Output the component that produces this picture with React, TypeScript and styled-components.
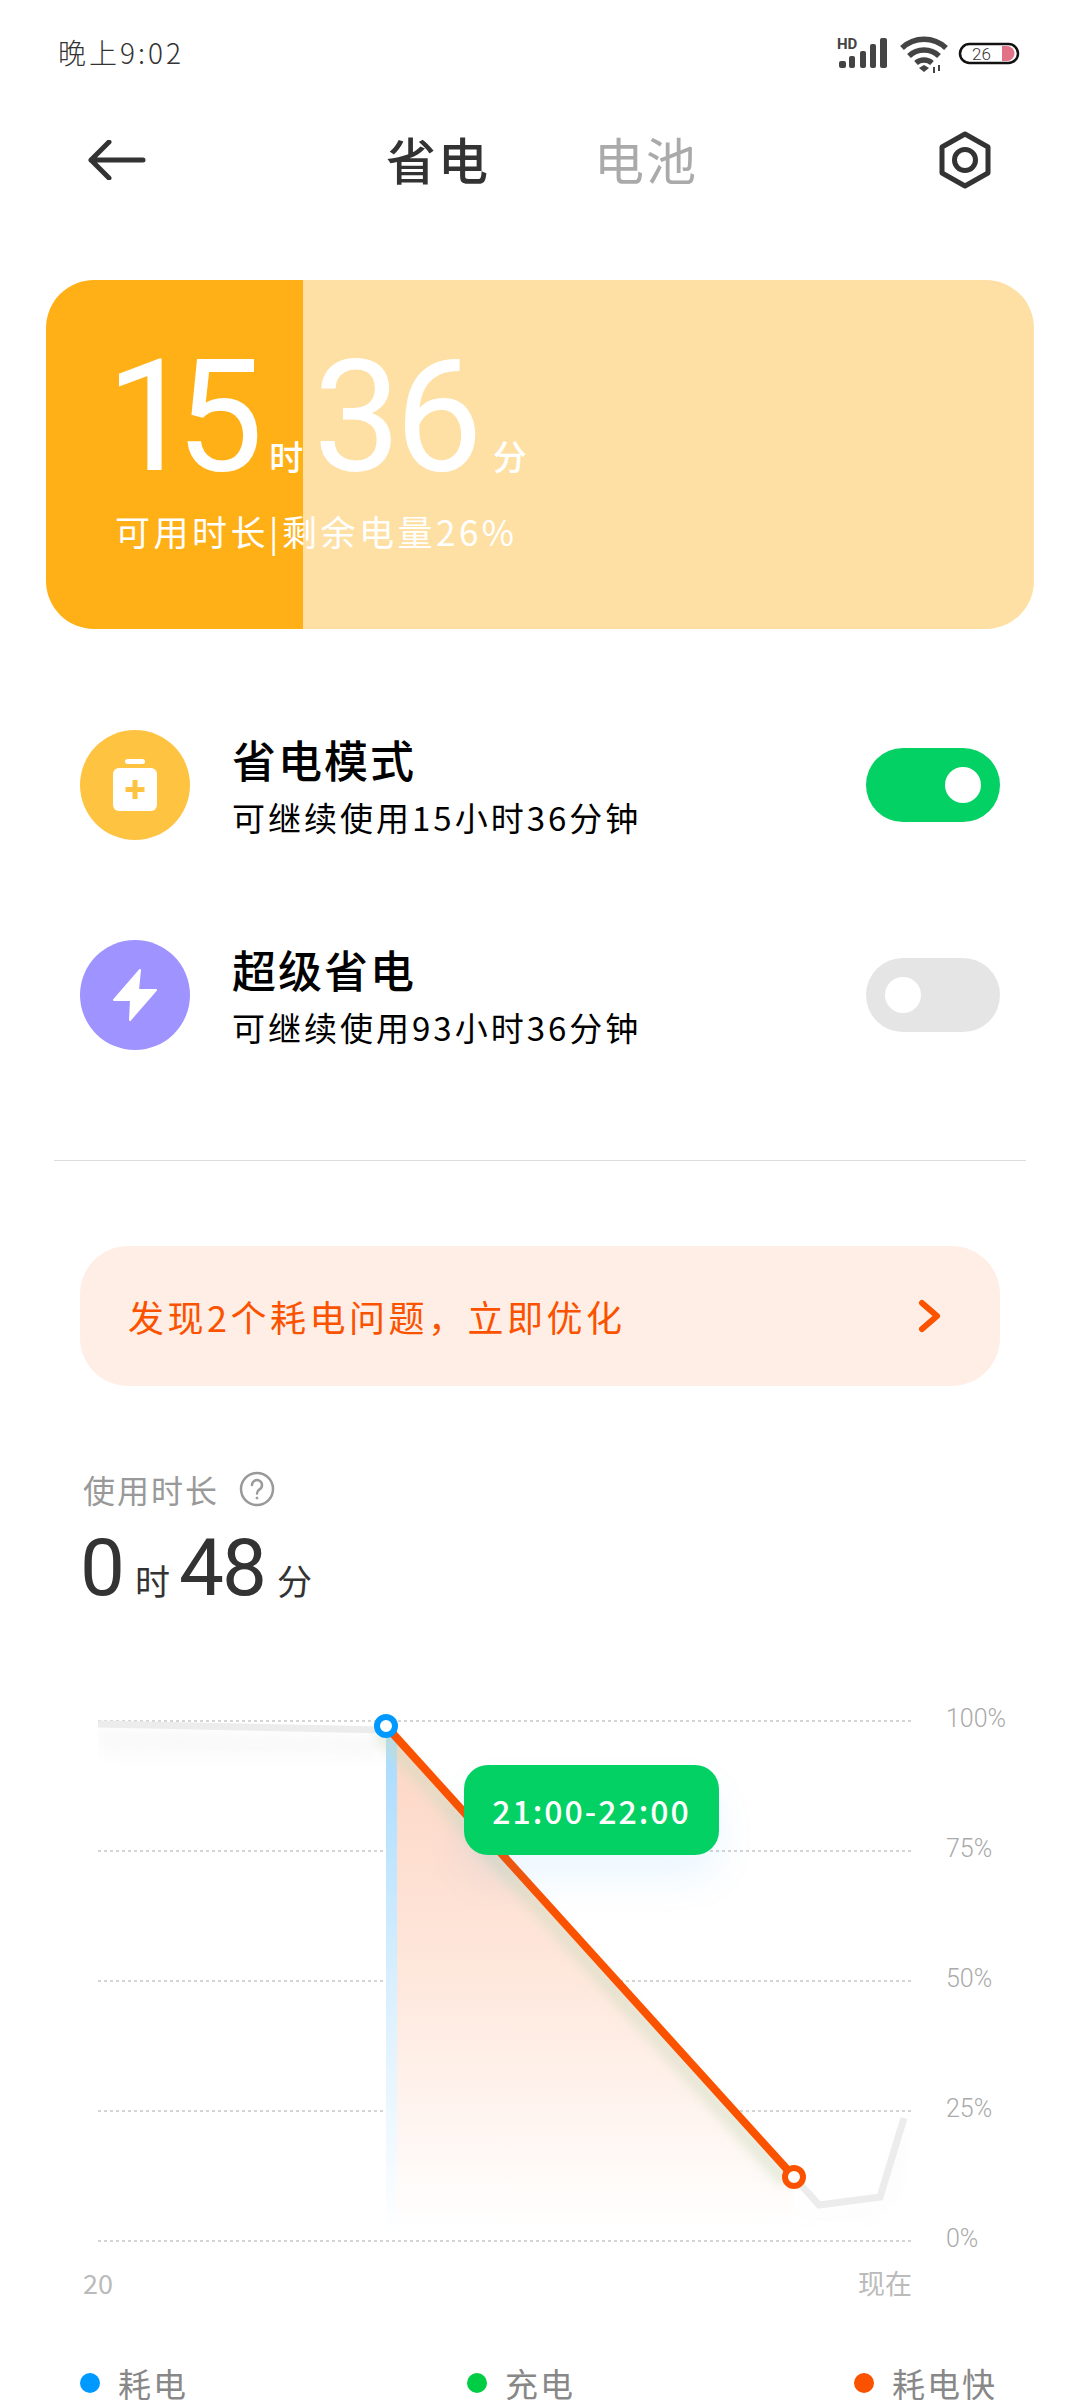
import React from 'react';
import styled, { createGlobalStyle } from 'styled-components';

const CJK = '"Noto Sans CJK SC", "Noto Sans", sans-serif';
const DIGITS = 'Roboto, "Noto Sans CJK SC", sans-serif';

const GlobalStyle = createGlobalStyle`
  html, body {
    margin: 0;
    padding: 0;
    background: #fff;
  }
  body {
    font-family: ${CJK};
  }
`;

const Page = styled.div`
  width: 1080px;
  height: 2400px;
  overflow: hidden;
  background: #fff;
`;

const StatusBar = styled.div`
  height: 104px;
  padding: 0 53px 0 58px;
  display: flex;
  align-items: center;
  justify-content: space-between;
  box-sizing: border-box;
`;

const Clock = styled.span`
  font-size: 28px;
  font-weight: 300;
  color: #333;
  letter-spacing: 3px;
`;

const StatusIcons = styled.svg`
  width: 190px;
  height: 50px;
  margin-top: 3px;
`;

const NavBar = styled.div`
  height: 112px;
  padding: 0 88px;
  display: flex;
  align-items: center;
  justify-content: space-between;
`;

const Tabs = styled.div`
  display: flex;
  gap: 104px;
  margin-top: -4px;
`;

const Tab = styled.span<{ $active?: boolean }>`
  font-size: 50px;
  line-height: 60px;
  letter-spacing: 2px;
  font-weight: ${(p) => (p.$active ? 500 : 400)};
  color: ${(p) => (p.$active ? '#333' : '#aaa')};
`;

const Card = styled.div<{ $level: number }>`
  height: 349px;
  margin: 64px 46px 0;
  padding: 62px 0 0 60px;
  box-sizing: border-box;
  border-radius: 48px;
  color: #fff;
  background: linear-gradient(
    90deg,
    #ffb017 ${(p) => p.$level}%,
    #fee0a5 ${(p) => p.$level}%
  );
`;

const CardNumbers = styled.div`
  display: flex;
  align-items: baseline;
  height: 150px;
`;

const BigDigit = styled.span<{ $spacing: number }>`
  font-family: ${DIGITS};
  font-size: 156px;
  line-height: 150px;
  font-weight: 400;
  letter-spacing: ${(p) => p.$spacing}px;
`;

const BigUnit = styled.span<{ $gap: number }>`
  font-size: 34px;
  line-height: 40px;
  font-weight: 500;
  margin: 0 -8px 0 ${(p) => p.$gap}px;
  width: 52px;
`;

const CardCaption = styled.div`
  margin-top: 14px;
  padding-left: 9px;
  font-size: 35px;
  line-height: 50px;
  letter-spacing: 3.5px;
`;

const ModeList = styled.div`
  margin-top: 51px;
`;

const ModeRow = styled.div`
  height: 210px;
  padding: 0 80px;
  display: flex;
  align-items: center;
`;

const ModeIcon = styled.div<{ $color: string }>`
  width: 110px;
  height: 110px;
  border-radius: 50%;
  background: ${(p) => p.$color};
  display: flex;
  align-items: center;
  justify-content: center;
  flex-shrink: 0;
`;

const ModeText = styled.div`
  flex: 1;
  margin-left: 42px;
`;

const ModeTitle = styled.div`
  font-size: 44px;
  line-height: 56px;
  font-weight: 500;
  letter-spacing: 2px;
  color: #000;
`;

const ModeSub = styled.div`
  margin-top: 8px;
  font-size: 33px;
  line-height: 44px;
  letter-spacing: 3px;
  color: #000;
`;

const Toggle = styled.div<{ $on?: boolean }>`
  width: 134px;
  height: 74px;
  border-radius: 37px;
  padding: 0 19px;
  box-sizing: border-box;
  display: flex;
  align-items: center;
  justify-content: ${(p) => (p.$on ? 'flex-end' : 'flex-start')};
  background: ${(p) => (p.$on ? '#03d164' : '#e5e5e5')};

  &::after {
    content: '';
    width: 36px;
    height: 36px;
    border-radius: 50%;
    background: #fff;
  }
`;

const Divider = styled.div`
  height: 1px;
  margin: 60px 54px 0;
  background: #ddd;
`;

const Banner = styled.div`
  height: 140px;
  margin: 85px 80px 0;
  padding: 0 58px 0 48px;
  border-radius: 48px;
  background: #ffeee6;
  display: flex;
  align-items: center;
  justify-content: space-between;
`;

const BannerText = styled.span`
  font-size: 36px;
  letter-spacing: 3.5px;
  color: #fb5200;
`;

const Usage = styled.div`
  margin: 83px 83px 0;
`;

const UsageLabel = styled.div`
  display: flex;
  align-items: center;
  gap: 20px;
  height: 40px;
  font-size: 32px;
  letter-spacing: 2px;
  color: #999;
`;

const UsageValue = styled.div`
  display: flex;
  align-items: baseline;
  margin: 19px 0 0 -3px;
  height: 80px;
  color: #333;
`;

const UsageDigit = styled.span`
  font-family: ${DIGITS};
  font-size: 80px;
  line-height: 80px;
  letter-spacing: -2px;
`;

const UsageUnit = styled.span`
  font-size: 35px;
  margin: 0 9px 0 12px;
`;

const Chart = styled.div`
  display: flex;
  margin: 92px 0 0 98px;
`;

const Plot = styled.div`
  position: relative;
  width: 815px;
  height: 560px;
`;

const PlotSvg = styled.svg`
  display: block;
`;

const Tooltip = styled.div`
  position: absolute;
  left: 366px;
  top: 65px;
  width: 255px;
  height: 90px;
  border-radius: 24px;
  background: #03d164;
  color: #fff;
  font-size: 32px;
  font-weight: 500;
  letter-spacing: 2px;
  display: flex;
  align-items: center;
  justify-content: center;
  box-shadow: 0 24px 40px rgba(0, 153, 255, 0.08);
`;

const YAxis = styled.div`
  margin: -46px 0 0 33px;
  display: flex;
  flex-direction: column;
`;

const YLabel = styled.div`
  height: 130px;
  line-height: 130px;
  font-family: ${DIGITS};
  font-weight: 300;
  font-size: 25px;
  color: #aaa;
`;

const XAxis = styled.div`
  width: 829px;
  margin: -41px 0 0 83px;
  display: flex;
  justify-content: space-between;
  font-size: 27px;
  line-height: 40px;
  color: #bbb;
`;

const Legend = styled.div`
  margin: 55px 83px 0 80px;
  display: flex;
  justify-content: space-between;
`;

const LegendItem = styled.div`
  display: flex;
  align-items: center;
  gap: 18px;
  font-size: 33px;
  line-height: 50px;
  letter-spacing: 2px;
  color: #888;
`;

const LegendDot = styled.span<{ $color: string }>`
  width: 20px;
  height: 20px;
  border-radius: 50%;
  background: ${(p) => p.$color};
`;

const GRID_Y = [21, 151, 281, 411, 541];
const Y_LABELS = ['100%', '75%', '50%', '25%', '0%'];

const LEGEND = [
  { label: '耗电', color: '#0099ff' },
  { label: '充电', color: '#00cc44' },
  { label: '耗电快', color: '#fb5200' },
];

const BackIcon = () => (
  <svg width="58" height="40" viewBox="0 0 58 40" fill="none" stroke="#333" strokeWidth="5" strokeLinecap="round" strokeLinejoin="round">
    <path d="M21 2 L3 20 L21 38 M3 20 H55" />
  </svg>
);

const SettingsIcon = () => (
  <svg width="54" height="58" viewBox="0 0 54 58" fill="none" stroke="#333" strokeLinejoin="round">
    <path d="M27 3 L50 16 V42 L27 55 L4 42 V16 Z" strokeWidth="5" />
    <circle cx="27" cy="29" r="10.5" strokeWidth="5" />
  </svg>
);

const BatteryPlusIcon = () => (
  <svg width="44" height="52" viewBox="0 0 44 52">
    <rect x="12" y="0" width="20" height="5" rx="2.5" fill="#fff" />
    <rect x="0" y="9" width="44" height="43" rx="6" fill="#fff" />
    <path d="M22 21 V40 M12.5 30.5 H31.5" stroke="#ffc342" strokeWidth="5" />
  </svg>
);

const BoltIcon = () => (
  <svg width="46" height="54" viewBox="0 0 46 54">
    <path d="M28 2 L2 32 H19 L18 52 L44 22 H26 Z" fill="#fff" stroke="#fff" strokeWidth="2" strokeLinejoin="round" />
  </svg>
);

const ChevronIcon = () => (
  <svg width="24" height="34" viewBox="0 0 24 34" fill="none" stroke="#fb5200" strokeWidth="6" strokeLinecap="round" strokeLinejoin="round">
    <path d="M4 4 L19 17 L4 30" />
  </svg>
);

const HelpIcon = () => (
  <svg width="36" height="36" viewBox="0 0 36 36" fill="none" stroke="#999" strokeWidth="2.5">
    <circle cx="18" cy="18" r="16" />
    <path d="M13 14 a5 5 0 1 1 7.5 4.4 c-1.6 1-2.5 1.8-2.5 4" strokeLinecap="round" />
    <circle cx="18" cy="27" r="1" fill="#999" strokeWidth="1" />
  </svg>
);

const StatusGlyphs = () => (
  <StatusIcons viewBox="0 0 190 50">
    <text x="0" y="20" fontFamily="Roboto, sans-serif" fontWeight="700" fontSize="15" fill="#444">HD</text>
    <g fill="#444">
      <rect x="2" y="32" width="7" height="7" rx="2" />
      <rect x="12" y="27" width="6" height="12" rx="2" />
      <rect x="23" y="22" width="6" height="17" rx="2" />
      <rect x="33" y="15" width="6" height="24" rx="2" />
      <rect x="43" y="9" width="7" height="30" rx="2" />
    </g>
    <g fill="none" stroke="#444" strokeWidth="5.5">
      <path d="M65 19 a32 32 0 0 1 44 0" />
      <path d="M72 27 a22 22 0 0 1 30 0" />
      <path d="M79 34 a12 12 0 0 1 16 0" />
    </g>
    <path d="M82 39 L87 36 L92 39 L87 43 Z" fill="#444" />
    <path d="M97 38 v6 M102 36 v6" stroke="#444" strokeWidth="2" />
    <rect x="123" y="15" width="58" height="19" rx="9.5" fill="#fff" stroke="#111" strokeWidth="2.5" />
    <path d="M165 17 h5 a7.5 7.5 0 0 1 0 15 h-5 Z" fill="#e27386" />
    <text x="135" y="31" fontFamily="Roboto, sans-serif" fontWeight="300" fontSize="17" fill="#333">26</text>
  </StatusIcons>
);

const UsageChart = () => (
  <PlotSvg width="815" height="560" viewBox="0 0 815 560">
    <defs>
      <linearGradient id="barFade" x1="0" y1="0" x2="0" y2="1">
        <stop offset="0" stopColor="#a5dafd" />
        <stop offset="0.5" stopColor="#d8efff" />
        <stop offset="1" stopColor="#ffffff" />
      </linearGradient>
      <linearGradient id="areaFade" x1="0" y1="0" x2="0" y2="1">
        <stop offset="0" stopColor="#fdd6c4" />
        <stop offset="0.5" stopColor="#fee8dd" />
        <stop offset="1" stopColor="#ffffff" />
      </linearGradient>
      <linearGradient id="greyFade" x1="0" y1="0" x2="0" y2="1">
        <stop offset="0" stopColor="#f2f2f2" />
        <stop offset="1" stopColor="#ffffff" />
      </linearGradient>
      <filter id="soft" x="-20%" y="-20%" width="140%" height="140%">
        <feGaussianBlur stdDeviation="6" />
      </filter>
    </defs>
    {GRID_Y.map((y) => (
      <line key={y} x1="0" y1={y} x2="815" y2={y} stroke="#aaa" strokeWidth="1" strokeDasharray="3 3" />
    ))}
    <path d="M0 30 L288 36 V70 L0 60 Z" fill="url(#greyFade)" filter="url(#soft)" opacity="0.6" />
    <path d="M0 24 L288 30" stroke="#ececec" strokeWidth="7" fill="none" />
    <path d="M696 497 L721 505 L782 497 L806 418 L802 500 L776 530 L716 535 L696 525 Z" fill="url(#greyFade)" filter="url(#soft)" opacity="0.5" />
    <path d="M696 477 L721 505 L782 497 L806 418" stroke="#ececec" strokeWidth="7" fill="none" />
    <rect x="288" y="26" width="11" height="510" fill="url(#barFade)" />
    <path d="M299 38 L696 477 V530 H299 Z" fill="url(#areaFade)" />
    <path d="M288 26 L696 477" stroke="#cfdcc0" strokeWidth="14" fill="none" filter="url(#soft)" transform="translate(-7 5)" opacity="0.55" />
    <path d="M288 26 L696 477" stroke="#fb5200" strokeWidth="8" fill="none" />
    <circle cx="288" cy="26" r="9" fill="#fff" stroke="#0099ff" strokeWidth="6" />
    <circle cx="696" cy="477" r="9" fill="#fff" stroke="#fb5200" strokeWidth="6" />
  </PlotSvg>
);

const App: React.FC = () => {
  return (
    <Page>
      <GlobalStyle />
      <StatusBar>
        <Clock>晚上9:02</Clock>
        <StatusGlyphs />
      </StatusBar>
      <NavBar>
        <BackIcon />
        <Tabs>
          <Tab $active>省电</Tab>
          <Tab>电池</Tab>
        </Tabs>
        <SettingsIcon />
      </NavBar>

      <Card $level={26}>
        <CardNumbers>
          <BigDigit $spacing={-18}>15</BigDigit>
          <BigUnit $gap={24}>时</BigUnit>
          <BigDigit $spacing={-6}>36</BigDigit>
          <BigUnit $gap={16}>分</BigUnit>
        </CardNumbers>
        <CardCaption>可用时长|剩余电量26%</CardCaption>
      </Card>

      <ModeList>
        <ModeRow>
          <ModeIcon $color="#ffc342">
            <BatteryPlusIcon />
          </ModeIcon>
          <ModeText>
            <ModeTitle>省电模式</ModeTitle>
            <ModeSub>可继续使用15小时36分钟</ModeSub>
          </ModeText>
          <Toggle $on />
        </ModeRow>
        <ModeRow>
          <ModeIcon $color="#9f94ff">
            <BoltIcon />
          </ModeIcon>
          <ModeText>
            <ModeTitle>超级省电</ModeTitle>
            <ModeSub>可继续使用93小时36分钟</ModeSub>
          </ModeText>
          <Toggle />
        </ModeRow>
      </ModeList>

      <Divider />

      <Banner>
        <BannerText>{'发现2个耗电问题\uFF0C立即优化'}</BannerText>
        <ChevronIcon />
      </Banner>

      <Usage>
        <UsageLabel>
          使用时长
          <HelpIcon />
        </UsageLabel>
        <UsageValue>
          <UsageDigit>0</UsageDigit>
          <UsageUnit>时</UsageUnit>
          <UsageDigit>48</UsageDigit>
          <UsageUnit>分</UsageUnit>
        </UsageValue>
      </Usage>

      <Chart>
        <Plot>
          <UsageChart />
          <Tooltip>21:00-22:00</Tooltip>
        </Plot>
        <YAxis>
          {Y_LABELS.map((label) => (
            <YLabel key={label}>{label}</YLabel>
          ))}
        </YAxis>
      </Chart>
      <XAxis>
        <span>20</span>
        <span>现在</span>
      </XAxis>
      <Legend>
        {LEGEND.map((item) => (
          <LegendItem key={item.label}>
            <LegendDot $color={item.color} />
            {item.label}
          </LegendItem>
        ))}
      </Legend>
    </Page>
  );
};

export default App;
